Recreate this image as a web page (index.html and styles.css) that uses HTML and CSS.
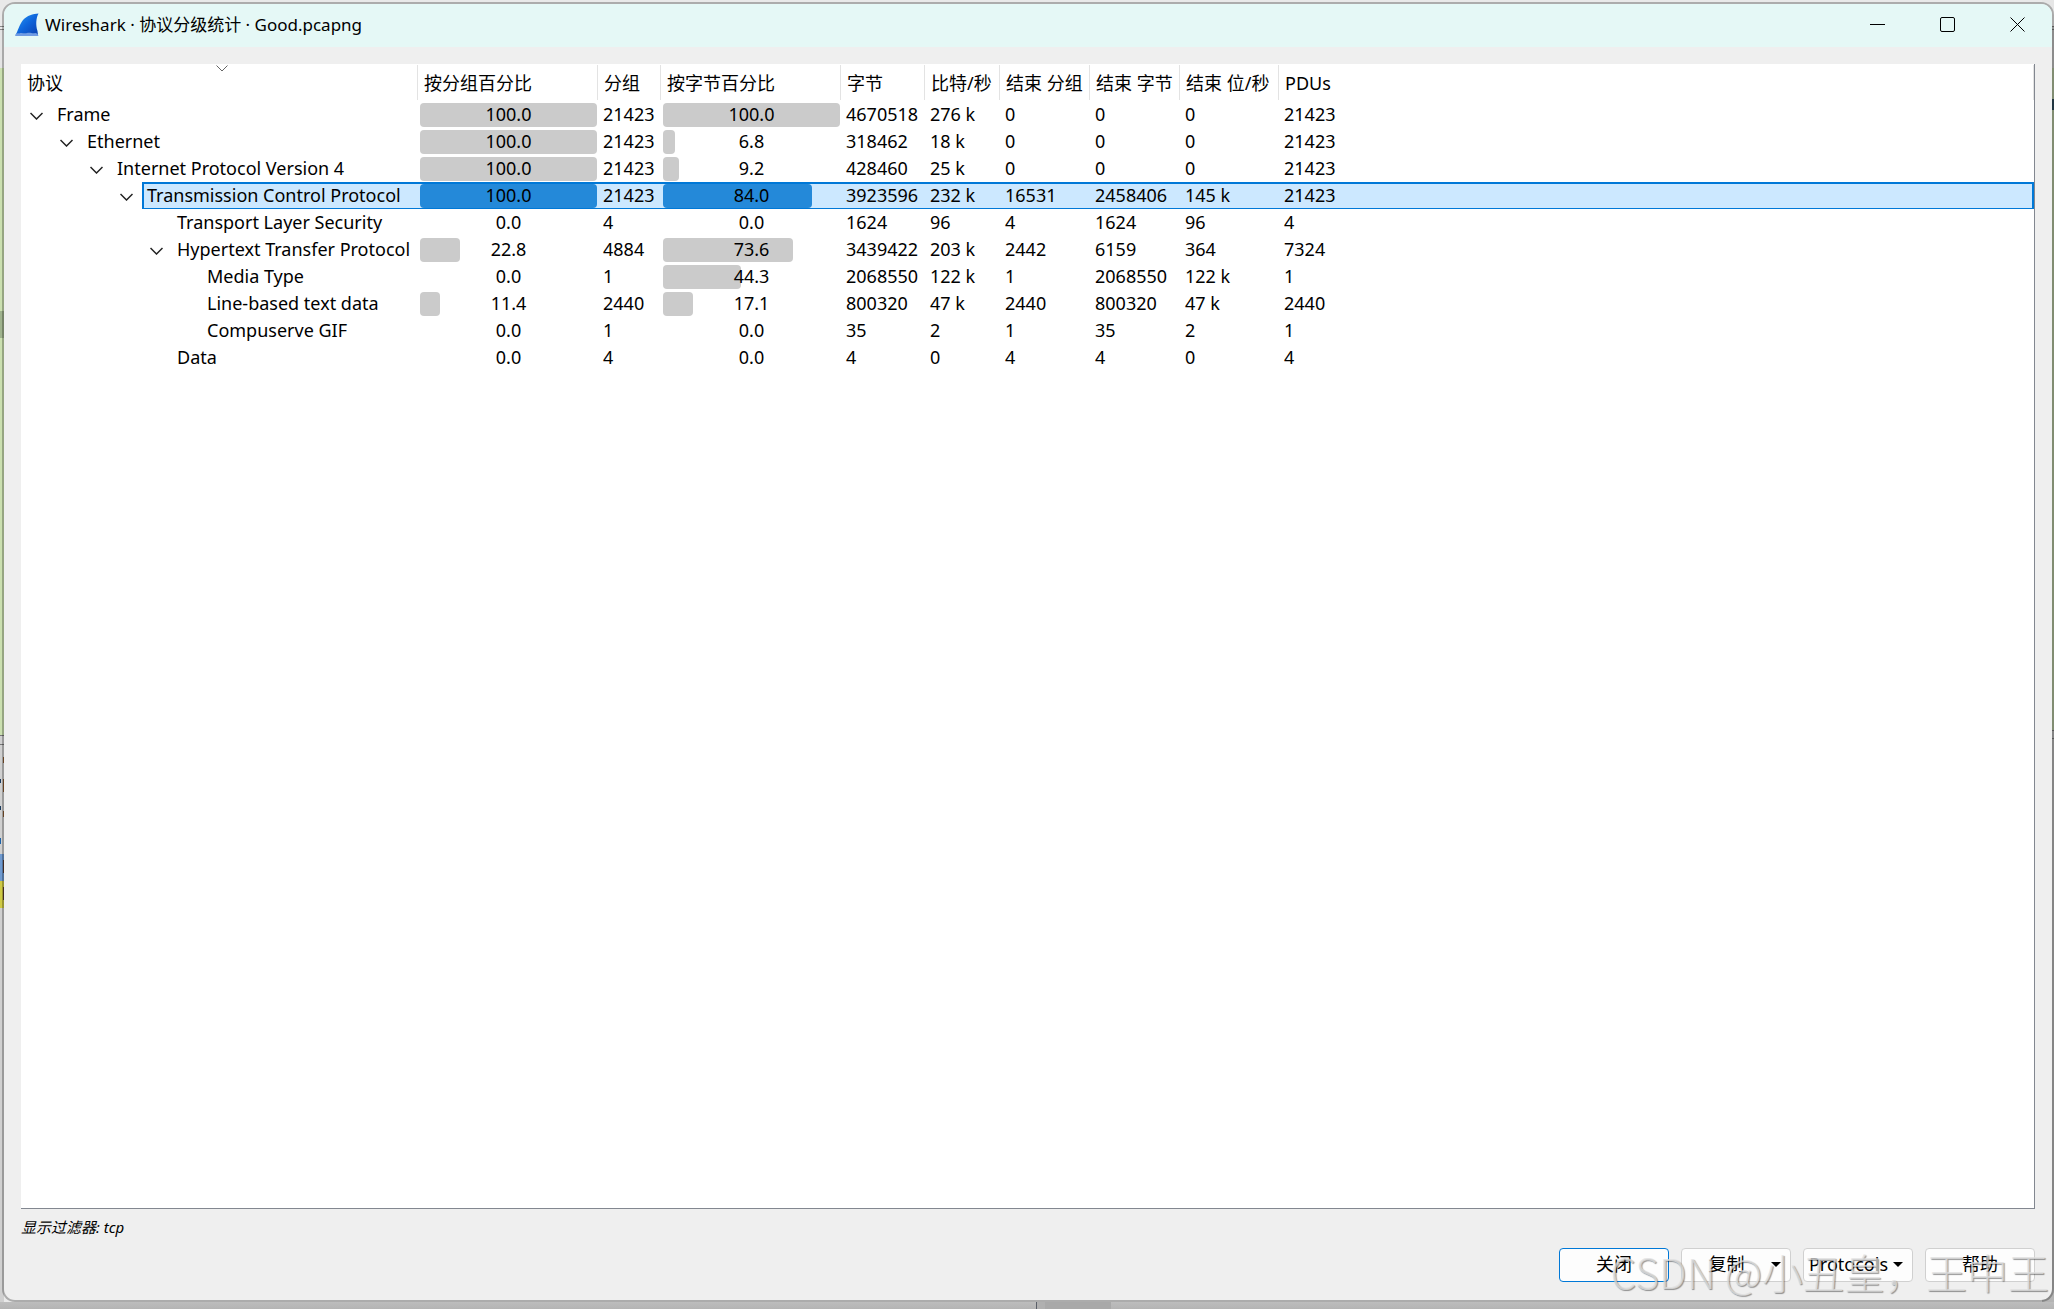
FILE: index.html
```html
<!DOCTYPE html>
<html lang="zh-CN">
<head>
<meta charset="utf-8">
<title>Wireshark · 协议分级统计 · Good.pcapng</title>
<link rel="stylesheet" href="styles.css">
</head>
<body>
<div class="window">
  <header class="titlebar">
    <svg class="logo" viewBox="0 0 24 24" aria-hidden="true">
      <defs><linearGradient id="fin" x1="0" y1="0" x2="1" y2="1"><stop offset="0" stop-color="#2a9df4"/><stop offset=".5" stop-color="#0f66dc"/><stop offset="1" stop-color="#0a3fae"/></linearGradient></defs>
      <path d="M.5 22C3 18 4 12 8 7 12 2.500 18 1 23.500 .5 21 5 20.500 12 22.500 18L23 22Z" fill="url(#fin)"/>
      <path d="M0 23C1 20.500 2 20 4 20.500 7 19 9 21 12 20 15 19 18 21 20 20 22 20 23 21 23.500 23Z" fill="#6f9be3"/>
    </svg>
    <h1 class="title">Wireshark · 协议分级统计 · Good.pcapng</h1>
    <div class="controls">
      <button class="control" type="button" aria-label="最小化"><svg viewBox="0 0 15 15"><path d="M0 7.500H15"/></svg></button>
      <button class="control" type="button" aria-label="最大化"><svg viewBox="0 0 15 15"><rect x=".5" y=".5" width="14" height="14" rx="1.500"/></svg></button>
      <button class="control" type="button" aria-label="关闭窗口"><svg viewBox="0 0 15 15"><path d="M.5 .5L14.500 14.500M14.500 .5L.5 14.500"/></svg></button>
    </div>
  </header>
  <main class="content">
    <div class="tree">
      <table class="stats">
        <colgroup><col class="c-name"><col class="c-bar"><col class="c-packets"><col class="c-bar"><col class="c-bytes"><col class="c-bits"><col class="c-end"><col class="c-end"><col class="c-endbits"><col></colgroup>
        <thead>
          <tr><th class="sorted">协议<svg class="sort" viewBox="0 0 12 7" aria-hidden="true"><path d="M.5 .5L6 6 11.500 .5"/></svg></th><th>按分组百分比</th><th>分组</th><th>按字节百分比</th><th>字节</th><th>比特/秒</th><th>结束 分组</th><th>结束 字节</th><th>结束 位/秒</th><th>PDUs</th></tr>
        </thead>
        <tbody>
          <tr><td class="name level-0"><div class="node"><button class="toggle" type="button" aria-label="折叠 Frame"><svg viewBox="0 0 13 8"><path d="M.5 1L6.500 7 12.500 1"/></svg></button><span class="label">Frame</span></div></td><td class="pct"><div class="meter"><div class="bar" style="width:100%"></div><span>100.0</span></div></td><td>21423</td><td class="pct"><div class="meter"><div class="bar" style="width:100%"></div><span>100.0</span></div></td><td>4670518</td><td>276 k</td><td>0</td><td>0</td><td>0</td><td>21423</td></tr>
          <tr><td class="name level-1"><div class="node"><button class="toggle" type="button" aria-label="折叠 Ethernet"><svg viewBox="0 0 13 8"><path d="M.5 1L6.500 7 12.500 1"/></svg></button><span class="label">Ethernet</span></div></td><td class="pct"><div class="meter"><div class="bar" style="width:100%"></div><span>100.0</span></div></td><td>21423</td><td class="pct"><div class="meter"><div class="bar" style="width:6.8%"></div><span>6.8</span></div></td><td>318462</td><td>18 k</td><td>0</td><td>0</td><td>0</td><td>21423</td></tr>
          <tr><td class="name level-2"><div class="node"><button class="toggle" type="button" aria-label="折叠 Internet Protocol Version 4"><svg viewBox="0 0 13 8"><path d="M.5 1L6.500 7 12.500 1"/></svg></button><span class="label">Internet Protocol Version 4</span></div></td><td class="pct"><div class="meter"><div class="bar" style="width:100%"></div><span>100.0</span></div></td><td>21423</td><td class="pct"><div class="meter"><div class="bar" style="width:9.2%"></div><span>9.2</span></div></td><td>428460</td><td>25 k</td><td>0</td><td>0</td><td>0</td><td>21423</td></tr>
          <tr class="selected"><td class="name level-3"><div class="node"><button class="toggle" type="button" aria-label="折叠 Transmission Control Protocol"><svg viewBox="0 0 13 8"><path d="M.5 1L6.500 7 12.500 1"/></svg></button><span class="label">Transmission Control Protocol</span></div></td><td class="pct"><div class="meter"><div class="bar" style="width:100%"></div><span>100.0</span></div></td><td>21423</td><td class="pct"><div class="meter"><div class="bar" style="width:84%"></div><span>84.0</span></div></td><td>3923596</td><td>232 k</td><td>16531</td><td>2458406</td><td>145 k</td><td>21423</td></tr>
          <tr><td class="name level-4"><div class="node leaf"><span class="label">Transport Layer Security</span></div></td><td class="pct"><div class="meter"><span>0.0</span></div></td><td>4</td><td class="pct"><div class="meter"><span>0.0</span></div></td><td>1624</td><td>96</td><td>4</td><td>1624</td><td>96</td><td>4</td></tr>
          <tr><td class="name level-4"><div class="node"><button class="toggle" type="button" aria-label="折叠 Hypertext Transfer Protocol"><svg viewBox="0 0 13 8"><path d="M.5 1L6.500 7 12.500 1"/></svg></button><span class="label">Hypertext Transfer Protocol</span></div></td><td class="pct"><div class="meter"><div class="bar" style="width:22.8%"></div><span>22.8</span></div></td><td>4884</td><td class="pct"><div class="meter"><div class="bar" style="width:73.6%"></div><span>73.6</span></div></td><td>3439422</td><td>203 k</td><td>2442</td><td>6159</td><td>364</td><td>7324</td></tr>
          <tr><td class="name level-5"><div class="node leaf"><span class="label">Media Type</span></div></td><td class="pct"><div class="meter"><span>0.0</span></div></td><td>1</td><td class="pct"><div class="meter"><div class="bar" style="width:44.3%"></div><span>44.3</span></div></td><td>2068550</td><td>122 k</td><td>1</td><td>2068550</td><td>122 k</td><td>1</td></tr>
          <tr><td class="name level-5"><div class="node leaf"><span class="label">Line-based text data</span></div></td><td class="pct"><div class="meter"><div class="bar" style="width:11.4%"></div><span>11.4</span></div></td><td>2440</td><td class="pct"><div class="meter"><div class="bar" style="width:17.1%"></div><span>17.1</span></div></td><td>800320</td><td>47 k</td><td>2440</td><td>800320</td><td>47 k</td><td>2440</td></tr>
          <tr><td class="name level-5"><div class="node leaf"><span class="label">Compuserve GIF</span></div></td><td class="pct"><div class="meter"><span>0.0</span></div></td><td>1</td><td class="pct"><div class="meter"><span>0.0</span></div></td><td>35</td><td>2</td><td>1</td><td>35</td><td>2</td><td>1</td></tr>
          <tr><td class="name level-4"><div class="node leaf"><span class="label">Data</span></div></td><td class="pct"><div class="meter"><span>0.0</span></div></td><td>4</td><td class="pct"><div class="meter"><span>0.0</span></div></td><td>4</td><td>0</td><td>4</td><td>4</td><td>0</td><td>4</td></tr>
        </tbody>
      </table>
    </div>
    <p class="hint">显示过滤器: tcp</p>
    <div class="actions">
      <button class="btn primary" type="button">关闭</button>
      <button class="btn menu" type="button"><span class="caption">复制</span><span class="caret"></span></button>
      <button class="btn menu" type="button"><span class="caption">Protocols</span><span class="caret"></span></button>
      <button class="btn" type="button">帮助</button>
    </div>
  </main>
</div>
<div class="watermark">CSDN @小丑皇，王中王</div>
</body>
</html>
```

FILE: styles.css
```css
* { box-sizing: border-box; }

body {
  margin: 0;
  height: 100vh;
  padding: 2px 0 7px 2px;
  position: relative;
  overflow: hidden;
  display: flex;
  font-family: "Noto Sans", "Noto Sans CJK SC", sans-serif;
  font-size: 18px;
  line-height: 22px;
  color: #000;
  /* slivers of the main window that show round the dialog */
  background:
    linear-gradient(90deg, transparent 1036px, #5a5f68 1036px 1037px, #b0b0b0 1037px 1045px, #a9a9a9 1045px 1111px, transparent 1111px) bottom / 100% 7px no-repeat,
    linear-gradient(#bdbdbd, #b4b4b4) bottom / 100% 7px no-repeat,
    linear-gradient(transparent 779px, #1b3a5c 779px 783px, transparent 783px 806px, #1b3a5c 806px 810px, transparent 810px 838px, #1d62a8 838px 844px, transparent 844px) left / 1px 100% no-repeat,
    linear-gradient(transparent 757px, #8a5a30 757px 763px, transparent 763px 779px, #8a5a30 779px 792px, transparent 792px 811px, #8a5a30 811px 817px, transparent 817px 860px, #5a3a30 860px 873px, transparent 873px 887px, #5a3a30 887px 900px, transparent 900px) 3px 0 / 1px 100% no-repeat,
    linear-gradient(#e9e9e9 26px, #888 26px 27px, #e9e9e9 27px 29px, #888 29px 30px, #e4e4e4 30px 68px, #cbe0b0 68px 311px, #9fb38d 311px 338px, #cbe0b0 338px 735px, #777 735px 736px, #d0d0d0 736px 744px, #777 744px 745px, #d0d0d0 745px 854px, #6f9ad0 854px 881px, #cfca45 881px 908px, #d0d0d0 908px) left / 4px 100% no-repeat,
    linear-gradient(#e6e6e6 26px, #777 26px 27px, #c4c4c4 27px 29px, #777 29px 30px, #bdbdbd 30px 68px, #aebf9a 68px 99px, #2f4a58 99px 110px, #aebf9a 110px 730px, #777 730px 731px, #b4b4b4 731px 738px, #777 738px 739px, #b4b4b4 739px) right / 12px 100% no-repeat,
    #e9e9e9;
}

.window {
  flex: 1;
  min-width: 0;
  display: flex;
  flex-direction: column;
  overflow: hidden;
  border: 2px solid rgba(0, 0, 0, .26);
  border-radius: 13px;
  background: #efefef;
  background-clip: padding-box;
}

.titlebar {
  display: flex;
  align-items: center;
  height: 43px;
  padding: 0 0 2px 11px;
  background: #e5f8f6;
}
.logo { width: 24px; height: 24px; }
.title {
  flex: 1;
  margin: 0 0 0 6px;
  font-size: 17px;
  font-weight: 400;
}
.controls { display: flex; align-self: stretch; }
.control {
  width: 70px;
  padding: 0;
  border: 0;
  background: none;
  display: grid;
  place-items: center;
}
.control svg { width: 15px; height: 15px; fill: none; stroke: #000; stroke-width: 1; }

.content {
  flex: 1;
  min-height: 0;
  display: flex;
  flex-direction: column;
  padding: 17px 17px 18px;
}

.tree {
  flex: 1;
  min-height: 0;
  overflow: hidden;
  background: #fff;
  border-right: 1px solid #828790;
  border-bottom: 1px solid #828790;
}

.stats {
  width: 100%;
  table-layout: fixed;
  border-collapse: separate;
  border-spacing: 0;
}
.c-name { width: 397px; }
.c-bar { width: 180px; }
.c-packets { width: 63px; }
.c-bytes { width: 84px; }
.c-bits { width: 75px; }
.c-end { width: 90px; }
.c-endbits { width: 99px; }

.stats th {
  height: 37px;
  padding: 0 0 0 6px;
  font-weight: 400;
  text-align: left;
  white-space: nowrap;
  background: linear-gradient(#e3e3e3, #e3e3e3) right center / 1px 35px no-repeat;
}
.sorted { position: relative; }
.sort {
  position: absolute;
  top: 1px;
  left: calc(50% - 4px);
  width: 12px;
  height: 7px;
  fill: none;
  stroke: #666;
}

.stats td {
  height: 27px;
  padding: 2px 0 3px 5px;
  vertical-align: top;
  white-space: nowrap;
}
.stats td.name { padding-top: 0; padding-bottom: 0; }
.stats td.level-0 { padding-left: 0; }
.stats td.level-1 { padding-left: 30px; }
.stats td.level-2 { padding-left: 60px; }
.stats td.level-3 { padding-left: 90px; }
.stats td.level-4 { padding-left: 120px; }
.stats td.level-5 { padding-left: 150px; }

.node { display: flex; height: 27px; }
.leaf { padding-left: 31px; }
.toggle {
  width: 31px;
  padding: 2px 0 0;
  border: 0;
  background: none;
  display: grid;
  place-items: center;
}
.toggle svg { width: 13px; height: 8px; fill: none; stroke: #222; stroke-width: 1.5; }
.label { flex: 1; padding: 2px 0 3px 5px; }

.stats td.pct { padding: 2px 1px 1px 2px; }
.meter { display: grid; height: 24px; }
.meter > * { grid-area: 1 / 1; }
.meter span { text-align: center; }
.bar { background: #cbcbcb; border-radius: 4px; }

.selected td:not(.name), .selected .label {
  background: #cce8ff;
  border-top: 2px solid #0078d7;
  border-bottom: 1px solid #0078d7;
}
.stats .selected td:not(.name) { padding-top: 0; padding-bottom: 0; }
.selected .label { padding: 0 0 0 3px; border-left: 2px solid #0078d7; }
.selected td:last-child { border-right: 2px solid #0078d7; }
.selected .bar { background: #2489d9; }

.hint {
  margin: 7px 0 9px;
  font-size: 15px;
  font-style: italic;
  line-height: 23px;
}

.actions { display: flex; justify-content: flex-end; gap: 12px; }
.btn {
  width: 110px;
  height: 34px;
  padding: 0 0 2px;
  border: 1px solid #d0d0d0;
  border-radius: 4px;
  background: #fdfdfd;
  font: inherit;
  color: #000;
}
.primary { border-color: #0078d7; }
.menu { display: flex; align-items: center; padding: 0 9px 2px 0; }
.caption { flex: 1; text-align: center; }
.caret {
  border: 5px solid transparent;
  border-top-color: #000;
  border-bottom: 0;
}

.watermark {
  position: absolute;
  right: 5px;
  bottom: 14px;
  font-family: "Noto Sans CJK SC", sans-serif;
  font-size: 41px;
  font-weight: 300;
  line-height: 48px;
  color: rgba(225, 225, 225, .75);
  text-shadow: 1px 1px 1px rgba(0, 0, 0, .4);
  white-space: nowrap;
  pointer-events: none;
}
```
